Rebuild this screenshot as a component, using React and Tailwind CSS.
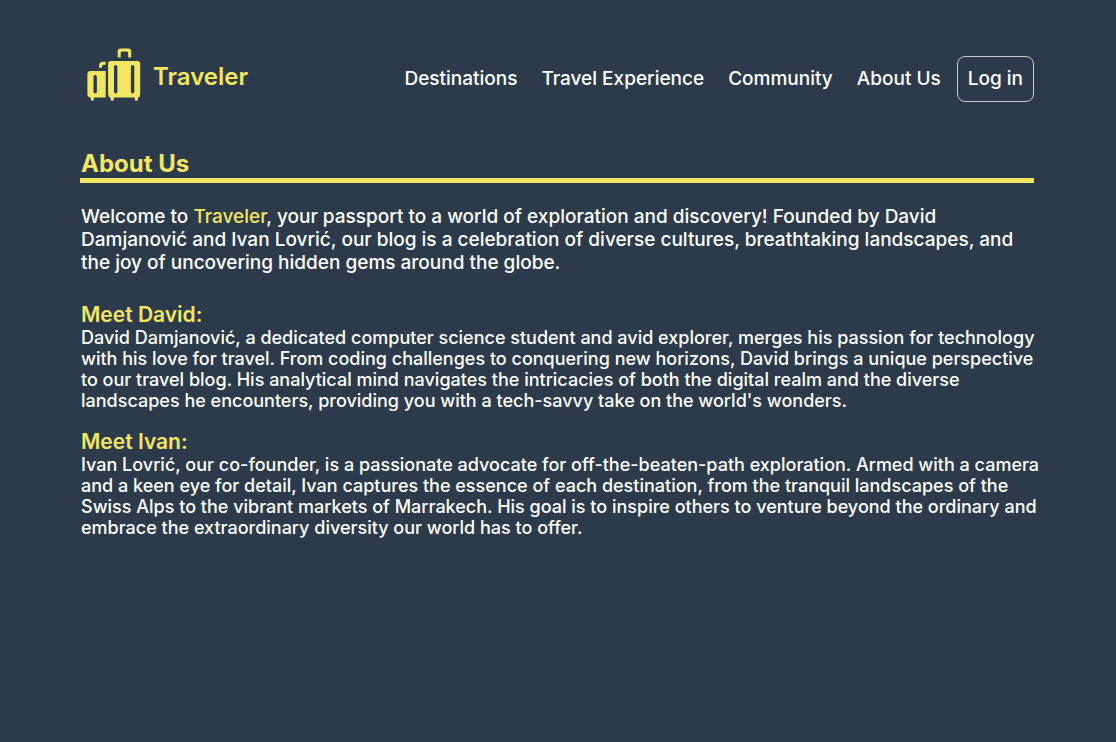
const links = ["Destinations", "Travel Experience", "Community", "About Us"];

function Luggage() {
  return (
    <svg width="54" height="53" viewBox="0 0 54 53" aria-hidden="true" className="shrink-0">
      <g fill="#f3e660">
        <path d="M30.7 9.6V3.4Q30.7 0.5 33.6 0.5H41.3Q44.2 0.5 44.2 3.4V9.6H41.2V4.8Q41.2 3.5 39.9 3.5H35Q33.7 3.5 33.7 4.8V9.6Z" />
        <path
          fillRule="evenodd"
          d="M23.8 13H50.5Q53.2 13 53.2 15.7V46.5Q53.2 49.3 51 49.6V51.2Q51 52.7 49.4 52.7Q47.8 52.7 47.8 51.2V49.6H26.8V51.2Q26.8 52.7 25.2 52.7Q23.6 52.7 23.6 51.2V49.6Q21.1 49.3 21.1 46.5V15.7Q21.1 13 23.8 13ZM28.7 17Q27 17 27 18.7V43.7Q27 45.4 28.7 45.4Q30.4 45.4 30.4 43.7V18.7Q30.4 17 28.7 17ZM45.6 17Q43.9 17 43.9 18.7V43.7Q43.9 45.4 45.6 45.4Q47.3 45.4 47.3 43.7V18.7Q47.3 17 45.6 17Z"
        />
        <path
          fillRule="evenodd"
          d="M3.4 23H18.7V49.6H6.9V51.2Q6.9 52.7 5.3 52.7Q3.7 52.7 3.7 51.2V49.6Q0.4 49.2 0.4 46.5V26Q0.4 23 3.4 23ZM8.2 27Q6.5 27 6.5 28.7V43.7Q6.5 45.4 8.2 45.4Q9.9 45.4 9.9 43.7V28.7Q9.9 27 8.2 27Z"
        />
        <path d="M12 19.8V18.2Q12 13.8 16.5 13.8H18.7V16.8H16.7Q15 16.8 15 18.5V19.8Z" />
      </g>
    </svg>
  );
}

function Person({ title, children }) {
  return (
    <section className="mt-[18px]">
      <h2 className="text-[21px] leading-[25px] font-semibold text-[#f3e660]">{title}</h2>
      <p className="-mr-2 text-lg leading-[21px] font-medium">{children}</p>
    </section>
  );
}

export default function App() {
  return (
    <div className="min-h-screen bg-[#2b3b4b] pt-12 pr-[82px] pl-20 font-['Inter',sans-serif] text-white">
      <header className="flex items-start justify-between pl-[7px]">
        <a href="#" className="flex items-center gap-3 text-2xl font-semibold text-[#f3e660]">
          <Luggage />
          <span className="pt-1">Traveler</span>
        </a>
        <nav className="flex items-center gap-6 pt-2 text-[19px] leading-6 font-medium whitespace-nowrap">
          {links.map((label) => (
            <a key={label} href="#">{label}</a>
          ))}
          <button type="button" className="-ml-2 rounded-lg border border-[#c5cbd1] px-2.5 py-2.5">
            Log in
          </button>
        </nav>
      </header>
      <main className="pt-[47px]">
        <h1 className="border-b-5 border-[#f3e660] pl-px text-2xl leading-[29px] font-bold text-[#f3e660]">About Us</h1>
        <div className="pt-[22px] pl-px">
          <p className="mb-7 text-[19px] leading-[23px] font-medium">
            Welcome to <span className="text-[#f3e660]">Traveler</span>, your passport to a world of exploration and
            discovery! Founded by David Damjanović and Ivan Lovrić, our blog is a celebration of diverse cultures,
            breathtaking landscapes, and the joy of uncovering hidden gems around the globe.
          </p>
          <Person title="Meet David:">
            David Damjanović, a dedicated computer science student and avid explorer, merges his passion for technology
            with his love for travel. From coding challenges to conquering new horizons, David brings a unique
            perspective to our travel blog. His analytical mind navigates the intricacies of both the digital realm and
            the diverse landscapes he encounters, providing you with a tech-savvy take on the world's wonders.
          </Person>
          <Person title="Meet Ivan:">
            Ivan Lovrić, our co-founder, is a passionate advocate for off-the-beaten-path exploration. Armed with a
            camera and a keen eye for detail, Ivan captures the essence of each destination, from the tranquil
            landscapes of the Swiss Alps to the vibrant markets of Marrakech. His goal is to inspire others to venture
            beyond the ordinary and embrace the extraordinary diversity our world has to offer.
          </Person>
        </div>
      </main>
    </div>
  );
}
